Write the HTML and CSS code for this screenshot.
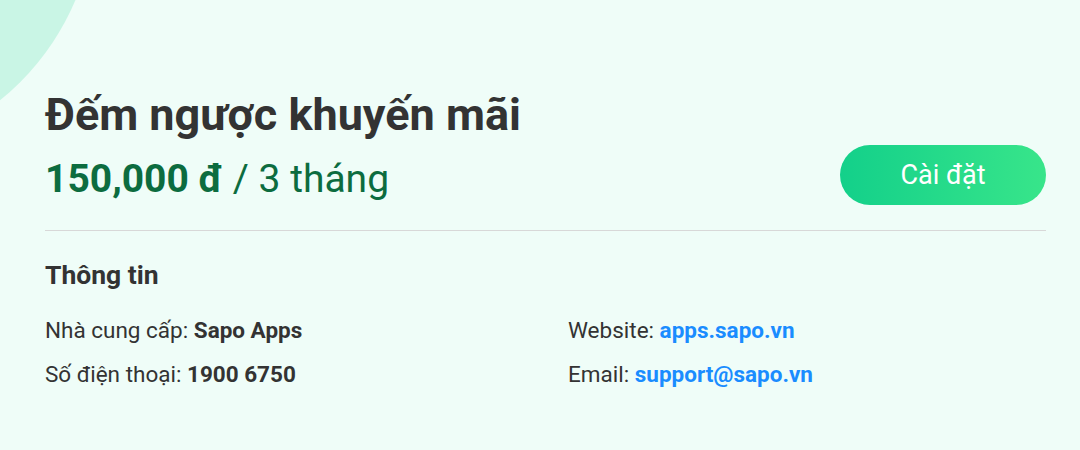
FILE: index.html
```html
<!DOCTYPE html>
<html lang="vi">
<head>
<meta charset="utf-8">
<link rel="stylesheet" href="styles.css">
</head>
<body>
<div class="page">
  <div class="blob"></div>
  <div class="content">
    <div class="header">
      <div class="titles">
        <h1 class="title">Đếm ngược khuyến mãi</h1>
        <div class="price"><b>150,000 đ</b> / 3 tháng</div>
      </div>
      <button class="install">Cài đặt</button>
    </div>
    <hr class="divider">
    <h2 class="section">Thông tin</h2>
    <div class="info">
      <div class="item">Nhà cung cấp: <b>Sapo Apps</b></div>
      <div class="item">Website: <a class="link">apps.sapo.vn</a></div>
      <div class="item">Số điện thoại: <b>1900 6750</b></div>
      <div class="item">Email: <a class="link">support@sapo.vn</a></div>
    </div>
  </div>
</div>
</body>
</html>
```

FILE: styles.css
```css
html, body {
  margin: 0;
  padding: 0;
}
body {
  background: #effdf8;
  font-family: Roboto, "Noto Sans", sans-serif;
  color: #333333;
  width: 1080px;
  height: 450px;
  overflow: hidden;
}
.page {
  position: relative;
  width: 1080px;
  height: 450px;
  overflow: hidden;
}
.blob {
  position: absolute;
  width: 518px;
  height: 518px;
  border-radius: 50%;
  background: #c9f5e5;
  left: -422px;
  top: -360px;
}
.content {
  position: relative;
  padding: 87px 34px 0 45px;
}
.header {
  display: flex;
  align-items: flex-end;
  justify-content: space-between;
}
.title {
  margin: 0;
  font-size: 45px;
  font-weight: 700;
  line-height: 56px;
  color: #333333;
}
.price {
  font-size: 39px;
  line-height: 52px;
  color: #0c6c3f;
  margin-top: 10px;
}
.price b {
  font-weight: 700;
}
.install {
  width: 206px;
  height: 60px;
  border: none;
  border-radius: 30px;
  background: linear-gradient(90deg, #13d08a 0%, #38e58a 100%);
  color: #ffffff;
  font-family: Roboto, sans-serif;
  font-size: 27px;
  padding: 0;
}
.divider {
  border: none;
  border-top: 1px solid #d8d8d8;
  margin: 25px 0 0 0;
}
.section {
  margin: 28px 0 0 0;
  font-size: 26.5px;
  font-weight: 700;
  line-height: 32px;
}
.info {
  display: grid;
  grid-template-columns: 523px 1fr;
  row-gap: 12px;
  margin-top: 23px;
}
.item {
  font-size: 22.5px;
  line-height: 32px;
}
.item b {
  font-weight: 700;
}
.link {
  color: #1a8cff;
  font-weight: 700;
  text-decoration: none;
}
```
